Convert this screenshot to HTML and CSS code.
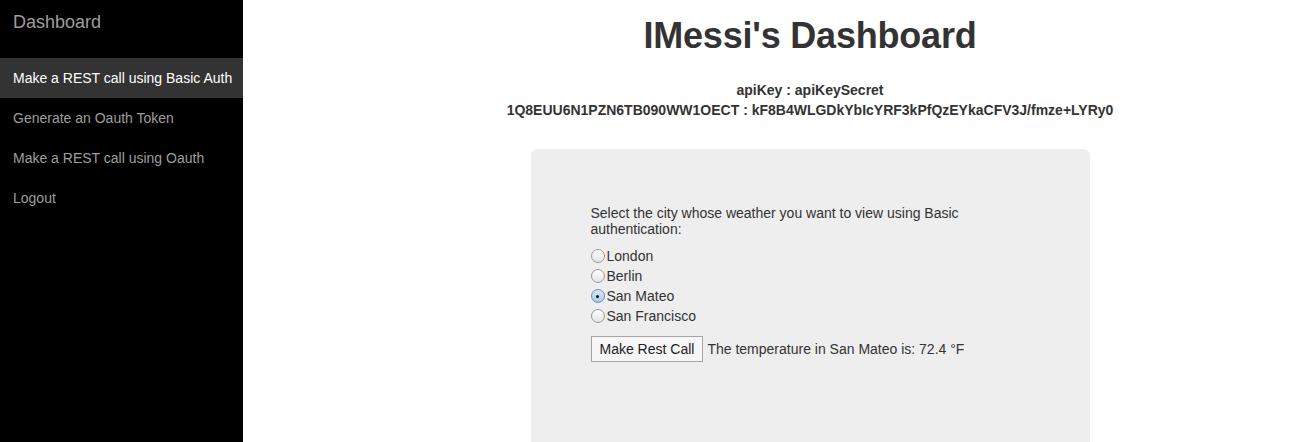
FILE: index.html
```html
<!DOCTYPE html>
<html>
<head>
<meta charset="utf-8">
<title>Dashboard</title>
<link rel="stylesheet" href="styles.css">
</head>
<body>
<div class="layout">
  <aside class="sidebar">
    <div class="brand">Dashboard</div>
    <nav class="nav">
      <a class="nav-item active">Make a REST call using Basic Auth</a>
      <a class="nav-item">Generate an Oauth Token</a>
      <a class="nav-item">Make a REST call using Oauth</a>
      <a class="nav-item">Logout</a>
    </nav>
  </aside>
  <main class="main">
    <h1 class="title">IMessi's Dashboard</h1>
    <div class="keys">
      <div>apiKey : apiKeySecret</div>
      <div>1Q8EUU6N1PZN6TB090WW1OECT : kF8B4WLGDkYbIcYRF3kPfQzEYkaCFV3J/fmze+LYRy0</div>
    </div>
    <section class="panel">
      <form class="form">
        <p class="prompt">Select the city whose weather you want to view using Basic authentication:</p>
        <div class="radios">
          <label class="radio"><span class="dot"></span>London</label>
          <label class="radio"><span class="dot"></span>Berlin</label>
          <label class="radio"><span class="dot checked"></span>San Mateo</label>
          <label class="radio"><span class="dot"></span>San Francisco</label>
        </div>
        <div class="action">
          <span class="btn">Make Rest Call</span>
          <span class="result">The temperature in San Mateo is: 72.4 °F</span>
        </div>
      </form>
    </section>
  </main>
</div>
</body>
</html>
```

FILE: styles.css
```css
* { box-sizing: border-box; }
html, body { margin: 0; padding: 0; height: 100%; }
body {
  font-family: "Liberation Sans", Arial, Helvetica, sans-serif;
  font-size: 14px;
  color: #333;
  background: #fff;
  overflow: hidden;
}
.layout {
  display: flex;
  height: 442px;
}
.sidebar {
  width: 243px;
  flex: none;
  background: #000;
}
.brand {
  height: 58px;
  padding: 12px 13px 0;
  font-size: 18px;
  line-height: 20px;
  color: #9d9d9d;
}
.nav { display: flex; flex-direction: column; }
.nav-item {
  display: block;
  padding: 10px 13px;
  line-height: 20px;
  color: #9d9d9d;
  white-space: nowrap;
}
.nav-item.active {
  background: #333;
  color: #fff;
}
.main {
  flex: 1;
  padding-left: 87px;
  display: flex;
  flex-direction: column;
  align-items: center;
}
.title {
  margin: 16px 0 0;
  font-size: 36px;
  line-height: 40px;
  font-weight: bold;
  color: #333;
  letter-spacing: -0.2px;
}
.keys {
  margin-top: 24px;
  font-weight: bold;
  line-height: 20px;
  text-align: center;
}
.panel {
  margin-top: 29px;
  width: 559px;
  flex: 1;
  background: #eee;
  border-radius: 6px 6px 0 0;
  padding: 56px 60px 0;
}
.form { width: 400px; }
.prompt {
  margin: 0 0 9px;
  line-height: 16px;
}
.radios { display: flex; flex-direction: column; }
.radio {
  display: flex;
  align-items: center;
  height: 20px;
}
.dot {
  width: 14px;
  height: 14px;
  margin-right: 2px;
  border-radius: 50%;
  border: 1px solid #9a9a9a;
  background: linear-gradient(#fdfdfd, #e4e4e4);
  position: relative;
}
.dot.checked {
  border-color: #6b8fb8;
  background: linear-gradient(#d8e8f8, #a9cbee);
}
.dot.checked::after {
  content: "";
  position: absolute;
  left: 4.5px;
  top: 4.5px;
  width: 3px;
  height: 3px;
  border-radius: 50%;
  background: #111;
}
.action {
  margin-top: 10px;
  display: flex;
  align-items: center;
}
.btn {
  display: inline-block;
  height: 26px;
  line-height: 24px;
  padding: 0 8px;
  border: 1px solid #a6a6a6;
  background: #f6f6f6;
  color: #222;
  margin-right: 4px;
}
.result { color: #333; }
```
